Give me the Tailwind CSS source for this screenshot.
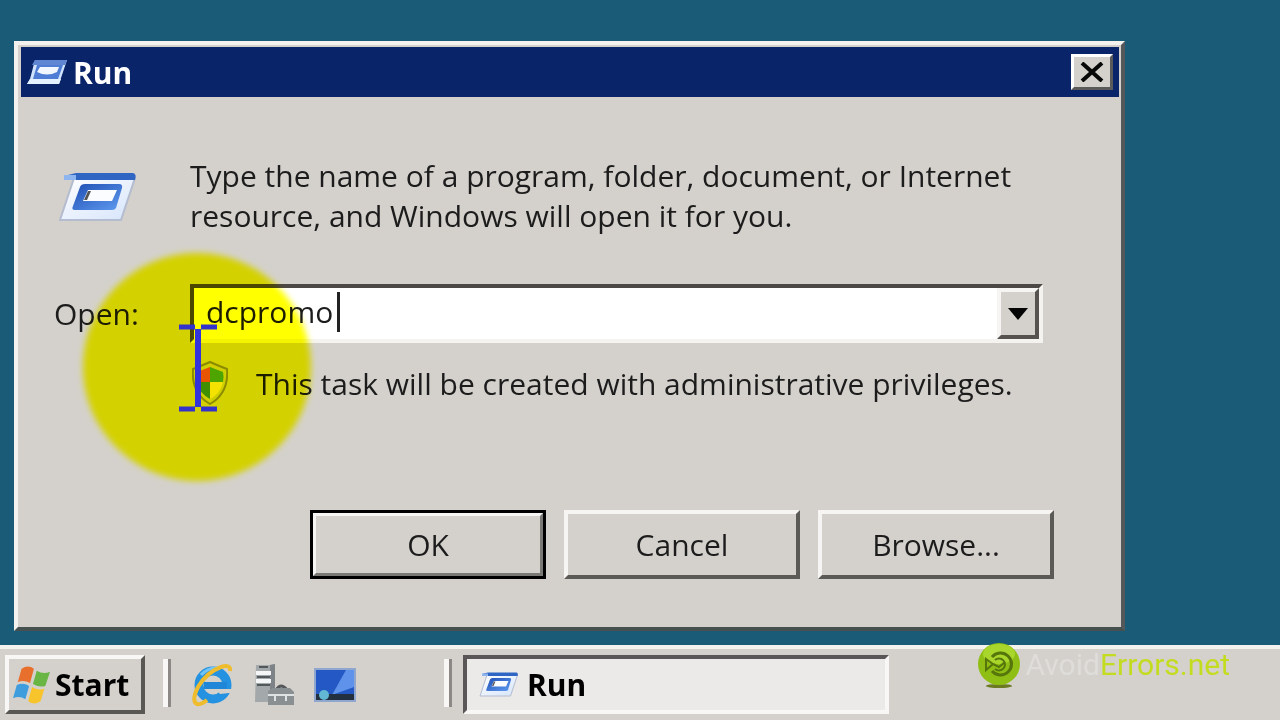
<!DOCTYPE html>
<html lang="en">
<head>
  <meta charset="UTF-8" />
  <meta name="viewport" content="width=device-width, initial-scale=1.0"/>
  <title>Run</title>
  <script src="https://cdn.jsdelivr.net/npm/@tailwindcss/browser@4"></script>
</head>
<body class="flex flex-col min-h-screen bg-[#1a5c78] text-[#1c1c1c] text-[30px] font-medium font-['Open_Sans','Noto_Sans',sans-serif]">

  <!-- shared icon -->
  <svg class="absolute w-0 h-0" aria-hidden="true">
    <defs>
      <linearGradient id="runBlue" x1="0" y1="0" x2="1" y2="1">
        <stop offset="0" stop-color="#1f4fb4"/>
        <stop offset="1" stop-color="#5f9bf0"/>
      </linearGradient>
      <linearGradient id="runPane" x1="0" y1="0" x2="1" y2="1">
        <stop offset="0" stop-color="#ffffff"/>
        <stop offset="1" stop-color="#d5e4fb"/>
      </linearGradient>
      <symbol id="runIcon" viewBox="0 0 80 52">
        <path d="M16 6H77L63 48H2Z" fill="url(#runPane)" stroke="#b4bccf" stroke-width="2"/>
        <path d="M18 1H75Q79 2 77 8H6V4Z" fill="#2f66c4"/>
        <path d="M6 3H18V8H6Z" fill="#8db5f0"/>
        <path d="M27 12H61Q65 12 64 16L58 36Q57 38 54 38H17Q13 38 15 34L22 15Q23 12 27 12Z" fill="url(#runBlue)"/>
        <path d="M30 18H59L54 29H25Z" fill="#fbfcff"/>
        <path d="M30 19H33L29 28H26Z" fill="#555"/>
      </symbol>
    </defs>
  </svg>

  <main class="flex-1 pt-[41px] pl-[14px] pr-[155px] pb-[13px]">
    <section class="relative bg-[#d4d1cc] border-4 border-t-[#f3f2ef] border-l-[#f3f2ef] border-r-[#55585a] border-b-[#45504f] p-[3px] pr-0.5 pt-0.5">

      <header class="flex items-center gap-1.5 h-[50px] pl-1.5 pr-1.5 bg-[#0a246a]">
        <svg class="w-10 h-[26px]" viewBox="0 0 40 26">
          <path d="M8 1H40L32 25H0L3 20Z" fill="#cfe3ff"/>
          <path d="M8 1H40L38 6H5Z" fill="#5f86d2"/>
          <path d="M10 6H36L31 20H6Z" fill="#4f7cd4"/>
          <path d="M13 8H32L30 13Q20 18 10 13Z" fill="#f2f7ff"/>
          <path d="M3 20H34L32 25H0Z" fill="#e4f1ff"/>
        </svg>
        <h1 class="flex-1 text-white font-bold">Run</h1>
        <button type="button" aria-label="Close" class="flex items-center justify-center w-[42px] h-9 bg-[#d4d1cc] border-3 border-t-white border-l-white border-r-[#5a5a5a] border-b-[#5a5a5a]">
          <svg class="w-6 h-5" viewBox="0 0 24 20"><path d="M2 1L22 19M22 1L2 19" stroke="#080808" stroke-width="4"/></svg>
        </button>
      </header>

      <form class="pl-[33px] pr-[76px] pt-[59px] pb-[45px]">
        <div class="flex">
          <div class="w-[136px] pt-4 pl-1 shrink-0">
            <svg class="w-20 h-[52px]"><use href="#runIcon"/></svg>
          </div>
          <p class="leading-[40px] whitespace-nowrap">Type the name of a program, folder, document, or Internet<br>resource, and Windows will open it for you.</p>
        </div>

        <div class="flex items-center mt-12">
          <label for="openName" class="w-[136px] shrink-0">Open:</label>
          <div class="relative flex flex-1 h-[59px] bg-white border-4 border-t-[#4c4846] border-l-[#4c4846] border-r-[#f4f3f0] border-b-[#f4f3f0]">
            <input id="openName" name="openName" type="text" value="dcpromo" autocomplete="off" class="flex-1 min-w-0 pl-3 pb-1 outline-none">
            <span class="absolute left-[143px] top-1 w-[3px] h-10 bg-[#222]"></span>
            <button type="button" aria-label="Show list" class="flex items-center justify-center w-[42px] bg-[#d4d1cc] border-4 border-t-[#f6f5f3] border-l-[#f6f5f3] border-r-[#55524f] border-b-[#55524f]">
              <svg class="w-5 h-3" viewBox="0 0 20 12"><path d="M0 0H20L10 12Z" fill="#050505"/></svg>
            </button>
          </div>
        </div>

        <div class="flex items-center mt-4 pl-[138px] h-12">
          <svg class="w-9 h-11 mr-7 shrink-0" viewBox="0 0 36 44">
            <path d="M18 1Q27 5 35 8Q37 32 18 43Q-1 32 1 8Q9 5 18 1Z" fill="#cfcfc4" stroke="#8b8b80" stroke-width="2"/>
            <path d="M18 6V21H5Q4 15 5 11Z" fill="#e8541c"/>
            <path d="M18 6L31 11Q32 15 31 21H18Z" fill="#4fa52c"/>
            <path d="M5 21H18V38Q7 32 5 21Z" fill="#3f8f28"/>
            <path d="M18 21H31Q29 32 18 38Z" fill="#f4e23c"/>
          </svg>
          <p class="whitespace-nowrap">This task will be created with administrative privileges.</p>
        </div>

        <div class="flex justify-end gap-[18px] mt-[103px] mr-[-11px]">
          <button type="submit" class="w-[236px] h-[69px] border-3 border-black">
            <span class="flex items-center justify-center h-full border-3 border-t-[#f6f5f3] border-l-[#f6f5f3] border-r-[#7b7976] border-b-[#7b7976]">OK</span>
          </button>
          <button type="button" class="w-[236px] h-[69px] border-4 border-t-[#f6f5f3] border-l-[#f6f5f3] border-r-[#5c5a57] border-b-[#5c5a57]">Cancel</button>
          <button type="button" class="w-[236px] h-[69px] border-4 border-t-[#f6f5f3] border-l-[#f6f5f3] border-r-[#5c5a57] border-b-[#5c5a57]">Browse...</button>
        </div>
      </form>

      <!-- click highlight and text cursor -->
      <div class="absolute left-[65px] top-[208px] w-[228px] h-[228px] rounded-full bg-[#ffff00] mix-blend-multiply blur-[3px] pointer-events-none"></div>
      <svg class="absolute left-[160px] top-[278px] w-10 h-[90px] pointer-events-none" viewBox="0 0 40 90">
        <path d="M1 4H17M23 4H39M1 86H17M23 86H39" stroke="#3333cc" stroke-width="5"/>
        <path d="M20 6V84" stroke="#3333dc" stroke-width="6"/>
      </svg>
    </section>
  </main>

  <footer class="flex items-start h-[75px] pt-1.5 pl-[5px] pr-[50px] bg-[#d4d1cc] border-t-4 border-[#f3f2ef]">
    <button type="button" class="flex items-center gap-1 w-[140px] h-[59px] pl-1 font-bold text-black border-4 border-t-[#f8f7f5] border-l-[#f8f7f5] border-r-[#5a5855] border-b-[#5a5855]">
      <svg class="w-[38px] h-10 shrink-0" viewBox="0 0 40 40">
        <path d="M9 3Q16 -2 22 3L18 18Q11 14 5 17Z" fill="#e8702c"/>
        <path d="M25 5Q32 9 39 6L34 21Q28 23 21 19Z" fill="#6ab644"/>
        <path d="M4 20Q11 17 17 21L13 35Q7 31 0 34Z" fill="#3f9ddd"/>
        <path d="M20 22Q27 26 33 24L29 37Q22 42 16 37Z" fill="#f8c42c"/>
      </svg>
      Start
    </button>
    <span class="w-2 h-12 ml-[18px] mt-1 border-l-5 border-r-3 border-l-[#f8f7f5] border-r-[#8b8885]"></span>
    <nav class="flex items-center gap-5 ml-[21px] h-[59px]">
      <a href="#" aria-label="Internet Explorer">
        <svg class="w-[42px] h-11" viewBox="0 0 42 44">
          <circle cx="21" cy="22" r="14" fill="none" stroke="#2492e0" stroke-width="9"/>
          <path d="M12 19H35V26H12Z" fill="#1f86d8"/>
          <path d="M24 26H42V30H37L28 31Z" fill="#d4d1cc"/>
          <path d="M9 12Q16 4 26 5" fill="none" stroke="#72c4f4" stroke-width="3"/>
          <path d="M38 8Q39 1 29 4Q15 9 6 24Q-1 38 5 41Q9 42 15 37" fill="none" stroke="#eebc2c" stroke-width="4"/>
        </svg>
      </a>
      <a href="#" aria-label="Server Manager">
        <svg class="w-10 h-[42px]" viewBox="0 0 40 42">
          <path d="M2 1H16L21 0V38H1Z" fill="#a3a8ab"/>
          <path d="M16 1L21 0V38H16Z" fill="#7d8386"/>
          <path d="M2 7H17V11H2ZM2 15H17V19H2Z" fill="#f4f6f7"/>
          <path d="M5 3H14M3 13H16M3 21H16" stroke="#53585b" stroke-width="2"/>
          <path d="M22 26Q27 18 33 26" fill="none" stroke="#55585a" stroke-width="3"/>
          <path d="M14 27L19 24H36L40 28V41H14Z" fill="#8a8f92"/>
          <path d="M14 31H40M21 30V37M32 30V37" stroke="#dfe2e3" stroke-width="2"/>
        </svg>
      </a>
      <a href="#" aria-label="Show desktop">
        <svg class="w-[42px] h-9" viewBox="0 0 42 36">
          <path d="M0 1H42V35H0Z" fill="#8fa6cf"/>
          <path d="M2 3H40V28H2Z" fill="#2458c4"/>
          <path d="M18 28L32 3H40V20Z" fill="#5f92ea"/>
          <path d="M2 27H40V33H2Z" fill="#22303f"/>
          <circle cx="10" cy="28" r="5" fill="#62b8d4"/>
        </svg>
      </a>
    </nav>
    <span class="w-2 h-12 ml-[88px] mt-1 border-l-5 border-r-3 border-l-[#f8f7f5] border-r-[#8b8885]"></span>
    <button type="button" class="flex items-center gap-2 w-[426px] h-[59px] ml-[11px] pl-3 font-bold text-black bg-[#ebeae8] border-4 border-t-[#5a5658] border-l-[#5a5658] border-r-[#f8f7f5] border-b-[#f8f7f5]">
      <svg class="w-10 h-[26px]"><use href="#runIcon"/></svg>
      Run
    </button>
    <a href="#" class="relative flex items-center ml-auto mt-[-13px] h-[46px] leading-[46px] text-[#c3dc20] font-normal font-['Roboto',sans-serif]">
      <svg class="w-11 h-[46px] mr-1" viewBox="0 0 44 46">
        <ellipse cx="22" cy="44" rx="13" ry="2" fill="#6b7a20"/>
        <circle cx="22" cy="22" r="21" fill="#8fbe14"/>
        <ellipse cx="22" cy="12" rx="16" ry="10" fill="#a9d62a"/>
        <path d="M15 15A11 11 0 1 1 15 29" fill="none" stroke="#56760c" stroke-width="3"/>
        <path d="M18 18A6 6 0 1 1 18 27" fill="none" stroke="#56760c" stroke-width="2"/>
        <path d="M9 17L16 22L9 28ZM16 22L22 25L28 20" fill="none" stroke="#56760c" stroke-width="2"/>
      </svg>
      <span class="text-[#dfddda]">Avoid</span><span>Errors.net</span>
    </a>
  </footer>
</body>
</html>
